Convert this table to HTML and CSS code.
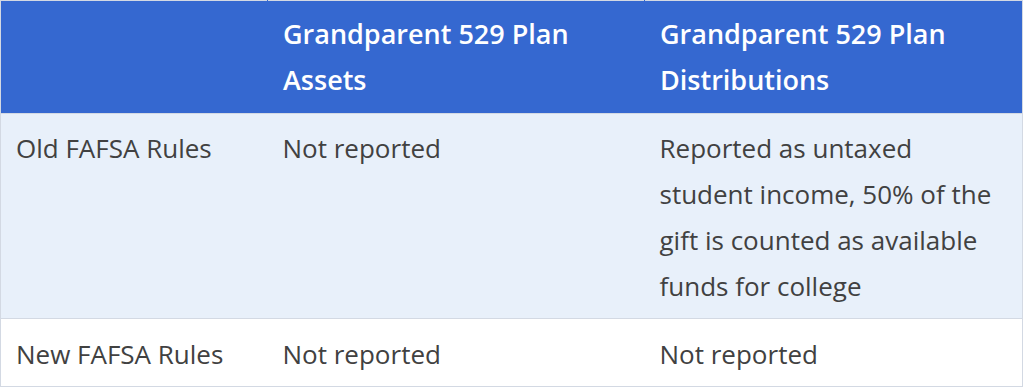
FILE: index.html
```html
<!DOCTYPE html>
<html lang="en">
<head>
<meta charset="utf-8">
<title>Grandparent 529 Plan FAFSA</title>
<link rel="stylesheet" href="styles.css">
</head>
<body>
<table class="fafsa">
  <colgroup>
    <col class="c1"><col class="c2"><col class="c3">
  </colgroup>
  <thead>
    <tr>
      <th></th>
      <th>Grandparent 529 Plan Assets</th>
      <th>Grandparent 529 Plan Distributions</th>
    </tr>
  </thead>
  <tbody>
    <tr class="alt">
      <td>Old FAFSA Rules</td>
      <td>Not reported</td>
      <td>Reported as untaxed student income, 50% of the gift is counted as available funds for college</td>
    </tr>
    <tr>
      <td>New FAFSA Rules</td>
      <td>Not reported</td>
      <td>Not reported</td>
    </tr>
  </tbody>
</table>
</body>
</html>
```
FILE: styles.css
```css
html, body {
  margin: 0;
  padding: 0;
  background: #ffffff;
}
.fafsa {
  width: 1022px;
  border-collapse: collapse;
  table-layout: fixed;
  font-family: "Open Sans", "Noto Sans", sans-serif;
  font-size: 26px;
  line-height: 46px;
  color: #414141;
}
.c1 { width: 267px; }
.c2 { width: 377px; }
.c3 { width: 378px; }
.fafsa th,
.fafsa td {
  border: 1px solid #d3d9e3;
  padding: 10px 15px;
  text-align: left;
  vertical-align: top;
}
.fafsa th {
  background: #3568d0;
  color: #ffffff;
  font-size: 27px;
  font-weight: 600;
  border-left-color: #3568d0;
  border-right-color: #3568d0;
}
.fafsa thead th:first-child { border-left-color: #d3d9e3; }
.fafsa thead th:last-child { border-right-color: #d3d9e3; }
.fafsa td {
  border-left: none;
  border-right: none;
  padding-top: 11px;
  padding-bottom: 9px;
}
.fafsa td:first-child { border-left: 1px solid #d3d9e3; }
.fafsa td:last-child { border-right: 1px solid #d3d9e3; }
.fafsa tbody tr:last-child td { padding-top: 12px; padding-bottom: 9px; }
.alt td { background: #e8f0fa; }
```
